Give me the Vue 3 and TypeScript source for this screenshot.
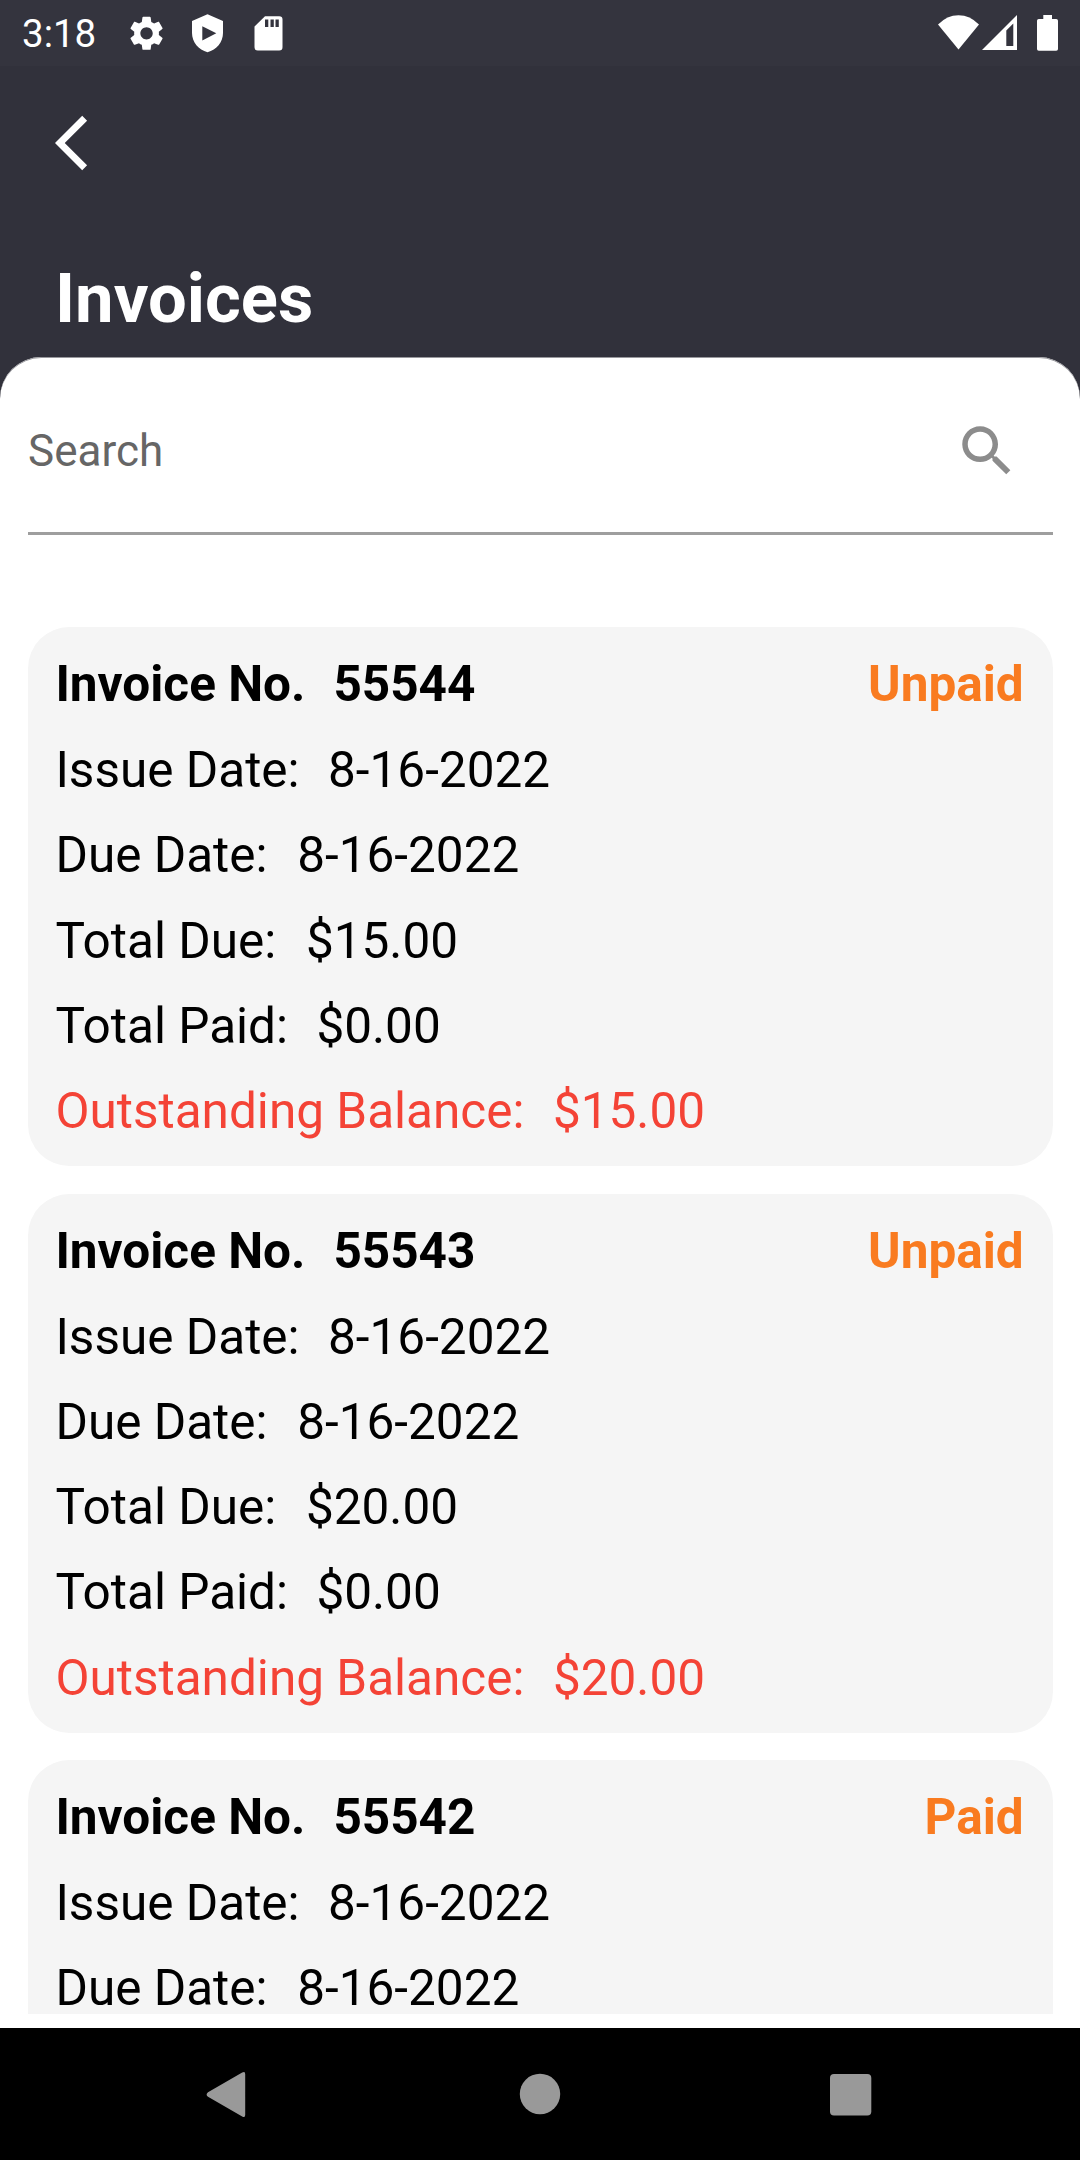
<script setup lang="ts">
interface Row {
  label: string
  value: string
  tone?: 'danger' | 'due'
}
interface Invoice {
  number: string
  status: 'Paid' | 'Unpaid'
  rows: Row[]
}

const dates: Row[] = [
  { label: 'Issue Date:', value: '8-16-2022' },
  { label: 'Due Date:', value: '8-16-2022', tone: 'due' },
]

function amounts(total: string, paid: string, balance: string): Row[] {
  return [
    { label: 'Total Due:', value: total, tone: 'due' },
    { label: 'Total Paid:', value: paid },
    { label: 'Outstanding Balance:', value: balance, tone: 'danger' },
  ]
}

const invoices: Invoice[] = [
  { number: '55544', status: 'Unpaid', rows: [...dates, ...amounts('$15.00', '$0.00', '$15.00')] },
  { number: '55543', status: 'Unpaid', rows: [...dates, ...amounts('$20.00', '$0.00', '$20.00')] },
  { number: '55542', status: 'Paid', rows: dates },
]
</script>

<template>
  <div class="screen">
    <div class="status-bar">
      <span class="clock">3:18</span>
      <svg class="status-left" width="170" height="66" viewBox="120 0 170 66" fill="#fff">
        <path transform="translate(125.9 12.7) scale(1.72)" d="M19.14 12.94c.04-.3.06-.61.06-.94 0-.32-.02-.64-.07-.94l2.03-1.58c.18-.14.23-.41.12-.61l-1.92-3.32c-.12-.22-.37-.29-.59-.22l-2.39.96c-.5-.38-1.03-.7-1.62-.94l-.36-2.54c-.04-.24-.24-.41-.48-.41h-3.84c-.24 0-.43.17-.47.41l-.36 2.54c-.59.24-1.13.57-1.62.94l-2.39-.96c-.22-.08-.47 0-.59.22L2.74 8.87c-.12.21-.08.47.12.61l2.03 1.58c-.05.3-.09.63-.09.94s.02.64.07.94l-2.03 1.58c-.18.14-.23.41-.12.61l1.92 3.32c.12.22.37.29.59.22l2.39-.96c.5.38 1.03.7 1.62.94l.36 2.54c.05.24.24.41.48.41h3.84c.24 0 .44-.17.47-.41l.36-2.54c.59-.24 1.13-.56 1.62-.94l2.39.96c.22.08.47 0 .59-.22l1.92-3.32c.12-.22.07-.47-.12-.61l-2.01-1.58zM12 15.6c-1.98 0-3.6-1.62-3.6-3.6s1.62-3.6 3.6-3.6 3.6 1.62 3.6 3.6-1.62 3.6-3.6 3.6z" />
        <path fill-rule="evenodd" d="M207.5 14.2L223 21v12c0 9-6.5 17-15.5 19.2C198.5 50 192 42 192 33V21zM202.3 26.2v14.3L216.3 33.3z" />
        <path fill-rule="evenodd" d="M265 16.2h14.2a3.3 3.3 0 0 1 3.3 3.3v27.7a3.3 3.3 0 0 1-3.3 3.3h-21.4a3.3 3.3 0 0 1-3.3-3.3V26.5zM265 19.5v7.5h3.3v-7.5zM270.5 19.5v7.5h3.3v-7.5zM275.5 19.5v7.5h3.3v-7.5z" />
      </svg>
      <svg class="status-right" width="150" height="66" viewBox="930 0 150 66" fill="#fff">
        <path d="M938 24.5Q947 15.2 958.5 15.2T979 24.5L958.5 49.5z" />
        <path fill-rule="evenodd" d="M982 50L1017 15V50zM1006.3 30.5V46h7V23.5z" />
        <path d="M1043.3 15h8.7v4h4.2a1.8 1.8 0 0 1 1.8 1.8v28.2a1.8 1.8 0 0 1-1.8 1.8h-17.4a1.8 1.8 0 0 1-1.8-1.8v-28.2a1.8 1.8 0 0 1 1.8-1.8h4.5z" />
      </svg>
    </div>

    <header class="header">
      <svg class="back" width="66" height="66" viewBox="0 0 24 24" fill="#fff">
        <path d="M11.67 3.87L9.9 2.1 0 12l9.9 9.9 1.77-1.77L3.54 12z" />
      </svg>
      <h1 class="title">Invoices</h1>
    </header>

    <main class="sheet">
      <div class="search">
        <span class="hint">Search</span>
        <svg width="66" height="66" viewBox="0 0 24 24" fill="#8c8c8c">
          <path d="M15.5 14h-.79l-.28-.27C15.41 12.59 16 11.11 16 9.5 16 5.91 13.09 3 9.5 3S3 5.91 3 9.5 5.91 16 9.5 16c1.61 0 3.09-.59 4.23-1.57l.27.28v.79l5 4.99L20.49 19l-4.99-5zm-6 0C7.01 14 5 11.99 5 9.5S7.01 5 9.5 5 14 7.01 14 9.5 11.99 14 9.5 14z" />
        </svg>
      </div>

      <div class="list">
        <article v-for="invoice in invoices" :key="invoice.number" class="card">
          <div class="row heading">
            <span>Invoice No.</span>
            <span>{{ invoice.number }}</span>
            <span class="status">{{ invoice.status }}</span>
          </div>
          <div v-for="row in invoice.rows" :key="row.label" class="row" :class="row.tone">
            <span>{{ row.label }}</span>
            <span>{{ row.value }}</span>
          </div>
        </article>
      </div>
    </main>

    <nav class="nav">
      <svg width="1080" height="132" viewBox="0 0 1080 132" fill="#999">
        <path d="M242.2 44.6Q245.2 42.8 245.2 46V87Q245.2 90.2 242.2 88.4L208 68.8Q205.2 66.5 208 64.2z" />
        <circle cx="540" cy="66" r="20.2" />
        <rect x="830" y="46" width="41.3" height="41.5" rx="4" />
      </svg>
    </nav>
  </div>
</template>

<style>
body {
  margin: 0;
  background: #31313b;
}
</style>

<style scoped>
.screen {
  width: 1080px;
  height: 2160px;
  display: flex;
  flex-direction: column;
  overflow: hidden;
  background: #31313b;
  font-family: Roboto, "Liberation Sans", sans-serif;
}
svg {
  display: block;
  flex: none;
}
.status-bar {
  flex: none;
  height: 66px;
  display: flex;
  align-items: center;
  background: #34343e;
  color: #fff;
}
.clock {
  width: 98px;
  padding-left: 22px;
  padding-top: 2px;
  font-size: 38.5px;
  line-height: 66px;
}
.status-right {
  margin-left: auto;
}
.header {
  flex: none;
  height: 291px;
  box-sizing: border-box;
  padding: 44px 55px 0;
  color: #fff;
}
.title {
  margin: 83px 0 0;
  font-size: 68.75px;
  line-height: 80px;
  font-weight: 700;
}
.sheet {
  flex: 1;
  min-height: 0;
  display: flex;
  flex-direction: column;
  box-sizing: border-box;
  padding: 0 27.5px 14px;
  border-radius: 41.25px 41.25px 0 0;
  background: #fff;
  box-shadow: inset 0 1px #98989d;
}
.search {
  flex: none;
  height: 178px;
  box-sizing: border-box;
  display: flex;
  align-items: center;
  justify-content: space-between;
  padding: 12.5px 33px 0 0.5px;
  border-bottom: 3px solid #9e9e9e;
}
.hint {
  font-size: 44px;
  color: #666;
}
.list {
  flex: 1;
  min-height: 0;
  overflow: hidden;
  margin-top: 92px;
  display: flex;
  flex-direction: column;
  gap: 27.5px;
}
.card {
  flex: none;
  height: 539px;
  box-sizing: border-box;
  padding: 28px 28.8px 0 27.9px;
  display: flex;
  flex-direction: column;
  gap: 27.25px;
  border-radius: 41.25px;
  background: #f5f5f5;
  color: #000;
}
.row {
  display: flex;
  gap: 28.4px;
  font-size: 49.5px;
  line-height: 58px;
  white-space: nowrap;
}
.heading {
  gap: 28px;
  margin-bottom: 0.75px;
  font-weight: 700;
}
.status {
  margin-left: auto;
  color: #f97b20;
}
.due {
  gap: 29.7px;
}
.danger {
  color: #f44336;
}
.nav {
  flex: none;
  height: 132px;
  background: #000;
}
</style>
